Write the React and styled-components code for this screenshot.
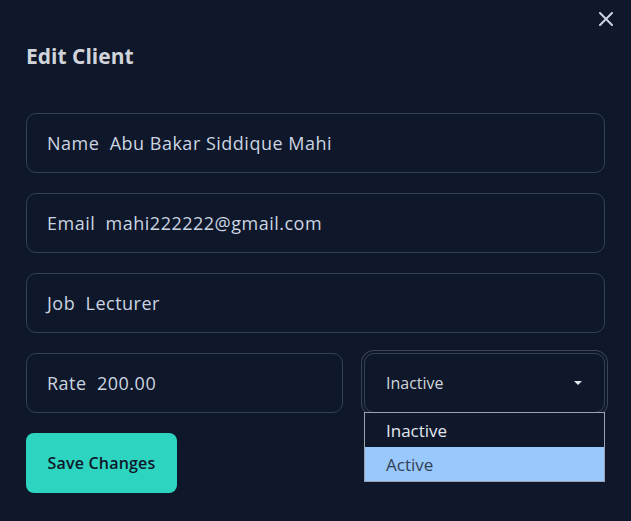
import styled, { createGlobalStyle } from "styled-components"

const GlobalStyle = createGlobalStyle`
    html, body {
        margin: 0;
        padding: 0;
        background: #0f172a;
    }
    body {
        font-family: "Open Sans", "Noto Sans", sans-serif;
    }
`;

const Modal = styled.div`
    position: relative;
    width: 631px;
    height: 521px;
    box-sizing: border-box;
    padding: 40px 26px 0 26px;
    background: #0f172a;
    color: #cbd5e1;
`;

const CloseButton = styled.button`
    position: absolute;
    top: 10px;
    right: 16px;
    width: 18px;
    height: 18px;
    padding: 0;
    border: none;
    background: none;
    cursor: pointer;
    display: flex;
    align-items: center;
    justify-content: center;
`;

const Title = styled.h2`
    margin: 0 0 41px 0;
    font-size: 21px;
    font-weight: 700;
    color: #d1d5db;
    line-height: 32px;
`;

const Form = styled.form`
    display: flex;
    flex-direction: column;
    gap: 20px;
`;

const Field = styled.div`
    box-sizing: border-box;
    height: 60px;
    display: flex;
    align-items: center;
    padding: 0 20px;
    border: 1px solid #334155;
    border-radius: 10px;
    font-size: 18px;
    letter-spacing: 0.5px;
    color: #cbd5e1;
    white-space: pre;
`;

const Row = styled.div`
    display: grid;
    grid-template-columns: 317px 1fr;
    gap: 20px;
`;

const SelectWrap = styled.div`
    position: relative;
`;

const SelectBox = styled.div`
    box-sizing: border-box;
    height: 60px;
    margin-left: 1px;
    display: flex;
    align-items: center;
    justify-content: space-between;
    padding: 0 22px 0 21px;
    border: 1px solid #334155;
    border-radius: 10px;
    box-shadow: 0 0 0 2px #0f172a, 0 0 0 3px #3b4556;
    font-size: 16px;
    color: #d1d5db;
`;

const Caret = styled.span`
    width: 0;
    height: 0;
    border-left: 4px solid transparent;
    border-right: 4px solid transparent;
    border-top: 4px solid #e2e8f0;
`;

const Options = styled.ul`
    position: absolute;
    top: 59px;
    left: 1px;
    right: 0;
    margin: 0;
    padding: 0;
    list-style: none;
    border: 1px solid #9ca3af;
    background: #0f172a;
    z-index: 2;
`;

const Option = styled.li`
    height: 34px;
    display: flex;
    align-items: center;
    padding-left: 21px;
    font-size: 17px;
    background: ${(p) => (p.selected ? "#99c8fd" : "#0f172a")};
    color: ${(p) => (p.selected ? "#334155" : "#e2e8f0")};
`;

const SaveButton = styled.button`
    align-self: flex-start;
    width: 151px;
    height: 60px;
    border: none;
    border-radius: 8px;
    background: #2dd4bf;
    color: #0f172a;
    font-family: inherit;
    font-size: 16px;
    font-weight: 600;
    letter-spacing: 0.2px;
    cursor: pointer;
`;

const App = () => {
    return (
        <Modal>
            <GlobalStyle />
            <CloseButton aria-label="close">
                <svg width="14" height="14" viewBox="0 0 14 14">
                    <path d="M1 1L13 13M13 1L1 13" stroke="#cbd5e1" strokeWidth="2" strokeLinecap="round" />
                </svg>
            </CloseButton>
            <Title>Edit Client</Title>
            <Form>
                <Field>Name  Abu Bakar Siddique Mahi</Field>
                <Field>Email  mahi222222@gmail.com</Field>
                <Field>Job  Lecturer</Field>
                <Row>
                    <Field>Rate  200.00</Field>
                    <SelectWrap>
                        <SelectBox>
                            <span>Inactive</span>
                            <Caret />
                        </SelectBox>
                        <Options>
                            <Option>Inactive</Option>
                            <Option selected>Active</Option>
                        </Options>
                    </SelectWrap>
                </Row>
                <SaveButton type="button">Save Changes</SaveButton>
            </Form>
        </Modal>
    )
}

export default App
